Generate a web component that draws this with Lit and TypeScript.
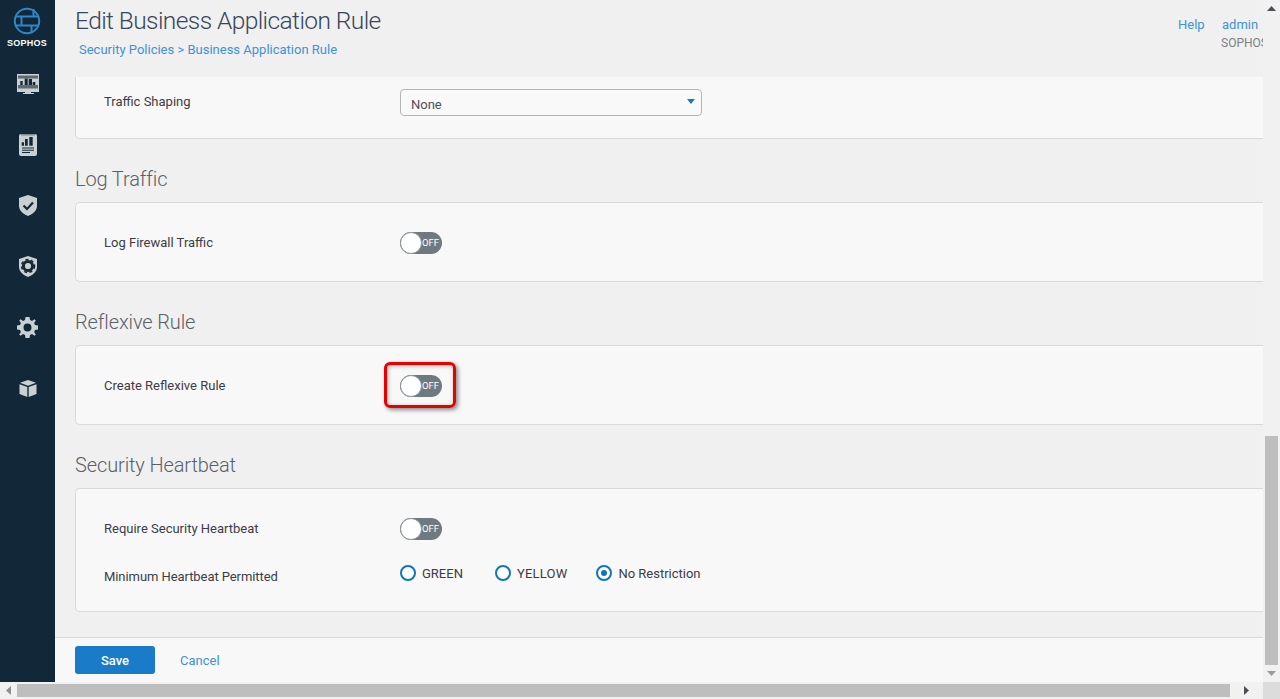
import { LitElement, html, css } from "lit";
import { customElement } from "lit/decorators.js";

const toggle = (hl = false) => html`<span class="toggle-wrap">
  <span class="toggle"><span class="knob"></span><span class="off">OFF</span></span>
  ${hl ? html`<span class="highlight"></span>` : ""}
</span>`;

const radio = (label: string, on = false) => html`<label class="radio">
  <span class="dot ${on ? "on" : ""}"></span><span>${label}</span></label>`;

@customElement("app-root")
export class AppRoot extends LitElement {
  static styles = css`
    :host { display: block; width: 1280px; height: 699px; overflow: hidden; background: #f0f0f0;
      font-family: "Roboto", "Liberation Sans", sans-serif; font-size: 13px; color: #3c3c46; }
    .top { display: flex; height: 682px; }
    .side { width: 55px; flex: none; background: #122738; display: flex; flex-direction: column; align-items: center; }
    .logo { height: 53px; display: flex; flex-direction: column; align-items: center; padding-top: 7px; box-sizing: border-box; width: 100%; }
    .logo svg { display: block; margin-left: -2px; }
    .logo span { font: 700 9px/9px "Liberation Sans", sans-serif; color: #fff; margin-top: 4px; letter-spacing: 0.25px; margin-left: -1px; }
    .nav { height: 61px; width: 100%; display: flex; align-items: center; justify-content: center; }
    .main { width: 1208px; flex: none; display: flex; flex-direction: column; overflow: hidden; }
    .head { height: 77px; flex: none; padding-left: 20px; position: relative; box-sizing: border-box; }
    h1 { margin: 0; padding-top: 6px; font-weight: 300; font-size: 24.5px; line-height: 30px; letter-spacing: -0.58px; color: #38465a; }
    .crumb { margin-top: 6px; padding-left: 4px; font-size: 13px; line-height: 16px; color: #3f92d6; }
    .links { position: absolute; top: 17px; right: 0; width: 85px; display: grid; grid-template-columns: 44px 41px; line-height: 16px; color: #3f92d6; }
    .org { grid-column: 2; margin-top: 2px; margin-left: -1px; color: #7d7f84; font-size: 12px; overflow: hidden; }
    .scroll { flex: 1; overflow: hidden; padding-left: 20px; }
    .card { background: #f8f8f8; border: 1px solid #d9d9d9; border-right: 0; border-radius: 5px 0 0 5px; padding: 0 0 0 28px; display: flex; flex-direction: column; }
    .card.first { border-top: 0; height: 62px; border-radius: 0 0 0 5px; padding-top: 12px; box-sizing: border-box; }
    .card.one { height: 80px; box-sizing: border-box; justify-content: center; padding-top: 2px; }
    .card.hb { height: 124px; box-sizing: border-box; padding-top: 28px; gap: 20px; }
    h2 { margin: 0; height: 63px; box-sizing: border-box; padding-top: 28px; font-weight: 300; font-size: 20px; line-height: 24px; letter-spacing: -0.12px; color: #5a6068; }
    .row { display: flex; align-items: center; min-height: 24px; }
    .lbl { width: 296px; flex: none; padding-bottom: 2px; }
    .lbl.low { padding-bottom: 0; padding-top: 6px; letter-spacing: -0.07px; }
    .select { width: 302px; height: 27px; box-sizing: border-box; border: 1px solid #b5b5b5; border-radius: 4px; background: #f9f9f9; padding: 3px 0 0 10px; display: flex; align-items: center; justify-content: space-between; color: #50505c; }
    .caret { width: 0; height: 0; border: 4px solid transparent; border-top: 5px solid #1279c4; border-bottom: 0; margin-right: 6px; margin-top: -5px; }
    .toggle-wrap { position: relative; display: inline-block; width: 42px; height: 22px; }
    .toggle { display: block; width: 42px; height: 22px; border-radius: 11px; background: #6f7a80; position: relative; }
    .knob { position: absolute; left: 0; top: 0; width: 22px; height: 22px; box-sizing: border-box; border-radius: 50%; background: #fff; border: 1px solid #8d969b; }
    .off { position: absolute; left: 22px; top: 0; line-height: 22px; font-size: 9.5px; color: #fff; }
    .highlight { position: absolute; left: -16px; top: -13px; width: 72px; height: 46px; box-sizing: border-box; border: 3px solid #e60000; border-radius: 6px; box-shadow: 2px 2px 4px rgba(0,0,0,.45), inset 1px 1px 4px rgba(0,0,0,.3); }
    .radios { display: flex; align-items: center; }
    .radio { display: inline-flex; align-items: center; gap: 6px; margin-right: 32px; }
    .radio:nth-child(2) { letter-spacing: 0.2px; margin-right: 29px; }
    .dot { width: 16px; height: 16px; box-sizing: border-box; border: 2px solid #0f75bc; border-radius: 50%; background: #fff; position: relative; flex: none; }
    .dot.on::after { content: ""; position: absolute; left: 3px; top: 3px; width: 6px; height: 6px; border-radius: 50%; background: #0f75bc; }
    .foot { height: 45px; flex: none; box-sizing: border-box; background: #f8f8f8; border-top: 1px solid #d9d9d9; padding-left: 20px; display: flex; align-items: center; gap: 25px; }
    .save { width: 80px; height: 28px; border: 0; border-radius: 3px; background: #1a7cc8; color: #fff; font: 500 13px "Roboto", sans-serif; padding: 0; }
    .cancel { color: #3f92d6; }
    .vbar { width: 17px; flex: none; background: #f1f1f1; display: flex; flex-direction: column; align-items: center; justify-content: space-between; height: 682px; }
    .vspace { flex: 1; width: 100%; display: flex; flex-direction: column; justify-content: flex-end; align-items: center; }
    .vthumb { width: 13px; height: 229px; background: #bebebe; }
    .arrow { height: 17px; display: flex; align-items: center; justify-content: center; flex: none; }
    .arrow.h { width: 17px; }
    .arrow.h2 { width: 33px; }
    .bottom { height: 17px; display: flex; background: #f1f1f1; }
    .hthumb { width: 1213px; height: 13px; margin-top: 2px; background: #bebebe; flex: none; }
    .corner { width: 17px; background: #dcdcdc; flex: none; }
  `;

  render() {
    return html`
      <div class="top">
        <aside class="side">
          <div class="logo">
            <svg width="28" height="28" viewBox="0 0 28 28" fill="none" stroke="#2f86c8" stroke-width="2">
              <circle cx="14" cy="14" r="12.2"/>
              <path d="M3 9.500H25M3 18.500H25M8.500 9.500V18.500M20.500 2V9.500M18.500 18.500V26"/>
            </svg>
            <span>SOPHOS</span>
          </div>
          <div class="nav"><svg width="22" height="20" viewBox="0 0 22 20"><path fill="#c9d0d2" d="M0 0H22V18H0ZM8 18H14V19H17V20H6V19H8Z"/><path fill="#5f6a70" d="M1 1.500H21V4.500H1ZM1 11H21V14.500H1Z"/><path fill="#122738" d="M3.300 7H5.700V11H3.300ZM7.700 4.500H10.700V11H7.700ZM11.700 5H15V11H11.700ZM15.700 8H18.300V11H15.700Z"/></svg></div>
          <div class="nav"><svg width="18" height="22" viewBox="0 0 18 22"><rect width="18" height="22" rx="2" fill="#c9d0d2"/><path fill="#7d8a91" d="M2 0H16V1.500H2Z"/><path fill="#122738" d="M2.700 8.300H5V11.700H2.700ZM6 5H8.700V11.700H6ZM10.300 3H13.700V11.700H10.300ZM3 13.500H15V14.500H3ZM3 15.700H15V16.700H3ZM3 18H11V19H3Z"/></svg></div>
          <div class="nav"><svg width="18" height="21" viewBox="0 0 18 21"><path fill="#c9d0d2" d="M9 0L18 3V11C18 16 13 19.500 9 21C5 19.500 0 16 0 11V3Z"/><path fill="none" stroke="#122738" stroke-width="2.200" d="M4.500 10.500L8 14L14 7.500"/></svg></div>
          <div class="nav"><svg width="18" height="21" viewBox="0 0 18 21"><path fill="#c9d0d2" d="M9 0L18 3V11C18 16 13 19.500 9 21C5 19.500 0 16 0 11V3Z"/><circle cx="9" cy="10" r="4.600" fill="none" stroke="#122738" stroke-width="3"/><circle cx="9" cy="10" r="6.500" fill="none" stroke="#122738" stroke-width="1.500" stroke-dasharray="3 2.450"/></svg></div>
          <div class="nav"><svg width="21" height="21" viewBox="0 0 21 21"><path fill="#c9d0d2" fill-rule="evenodd" d="M8.500 0H12.500L13 3L15 3.900L17.500 2.200L18.800 3.500L17.100 6L18 8L21 8.500V12.500L18 13L17.100 15L18.800 17.500L17.500 18.800L15 17.100L13 18L12.500 21H8.500L8 18L6 17.100L3.500 18.800L2.200 17.500L3.900 15L3 13L0 12.500V8.500L3 8L3.900 6L2.200 3.500L3.500 2.200L6 3.900L8 3ZM10.500 6.500A4 4 0 1 0 10.500 14.500A4 4 0 1 0 10.500 6.500Z"/></svg></div>
          <div class="nav"><svg width="18" height="17" viewBox="0 0 18 17"><path fill="#c9d0d2" d="M9 0L17 2.800L9 5.700L1 2.800ZM0.500 4.200L8.300 7V17L0.500 14ZM17.500 4.200V14L9.700 17V7Z"/></svg></div>
        </aside>
        <main class="main">
          <header class="head">
            <h1>Edit Business Application Rule</h1>
            <div class="crumb">Security Policies &gt; Business Application Rule</div>
            <div class="links"><span>Help</span><span>admin</span><span class="org">SOPHOS</span></div>
          </header>
          <div class="scroll">
            <section class="card first"><div class="row"><span class="lbl">Traffic Shaping</span><span class="select"><span>None</span><span class="caret"></span></span></div></section>
            <h2>Log Traffic</h2>
            <section class="card one"><div class="row"><span class="lbl">Log Firewall Traffic</span>${toggle()}</div></section>
            <h2>Reflexive Rule</h2>
            <section class="card one"><div class="row"><span class="lbl">Create Reflexive Rule</span>${toggle(true)}</div></section>
            <h2>Security Heartbeat</h2>
            <section class="card hb">
              <div class="row"><span class="lbl">Require Security Heartbeat</span>${toggle()}</div>
              <div class="row"><span class="lbl low">Minimum Heartbeat Permitted</span><span class="radios">${radio("GREEN")}${radio("YELLOW")}${radio("No Restriction", true)}</span></div>
            </section>
          </div>
          <footer class="foot"><button class="save">Save</button><span class="cancel">Cancel</span></footer>
        </main>
        <div class="vbar">
          <div class="arrow"><svg width="9" height="5" viewBox="0 0 9 5"><path fill="#4d4d55" d="M4.500 0L9 5H0Z"/></svg></div>
          <div class="vspace"><div class="vthumb"></div></div>
          <div class="arrow"><svg width="9" height="5" viewBox="0 0 9 5"><path fill="#9a9a9a" d="M0 0H9L4.500 5Z"/></svg></div>
        </div>
      </div>
      <div class="bottom">
        <div class="arrow h"><svg width="5" height="9" viewBox="0 0 5 9"><path fill="#8f8f8f" d="M5 0V9L0 4.500Z"/></svg></div>
        <div class="hthumb"></div>
        <div class="arrow h2"><svg width="5" height="9" viewBox="0 0 5 9"><path fill="#4d4d55" d="M0 0V9L5 4.500Z"/></svg></div>
        <div class="corner"></div>
      </div>
    `;
  }
}
